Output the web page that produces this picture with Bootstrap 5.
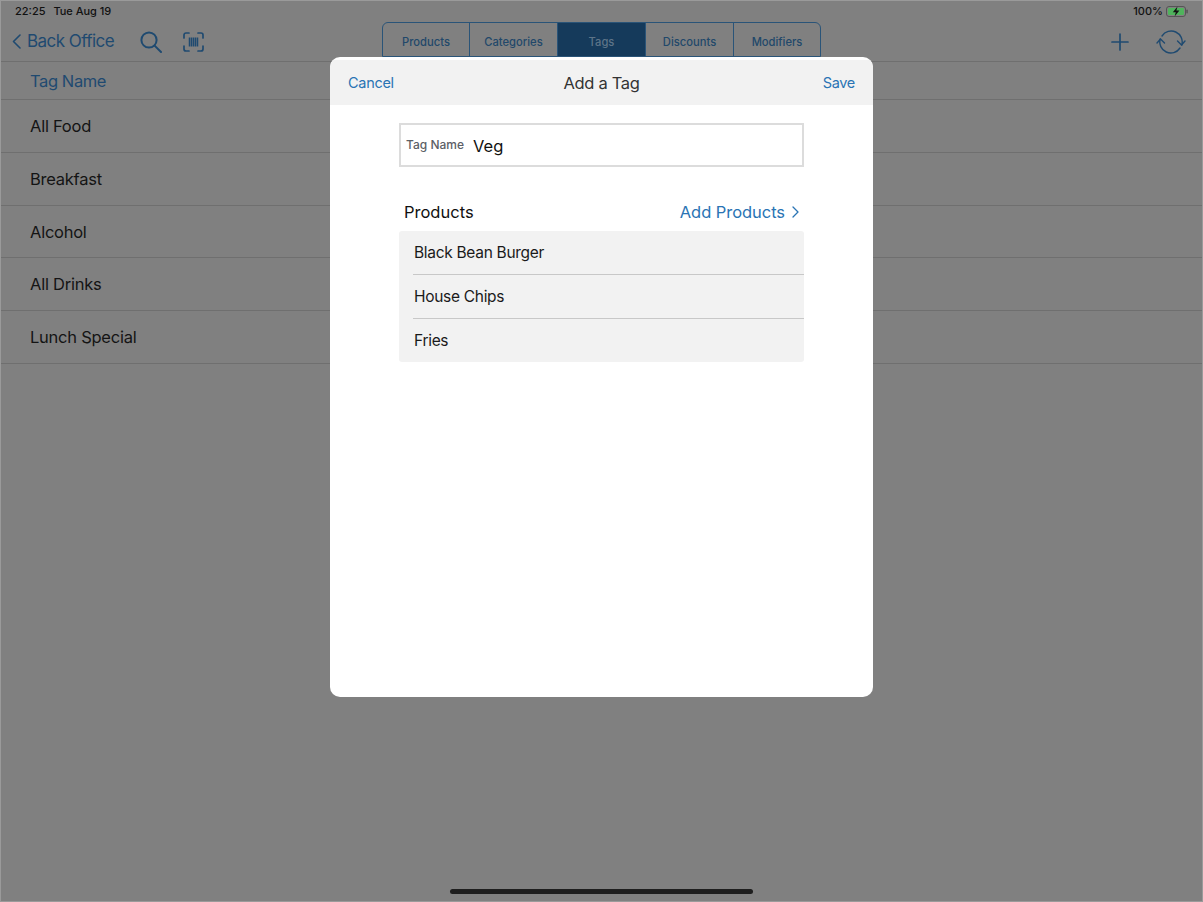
<!DOCTYPE html>
<html lang="en">

<head>
    <meta charset="UTF-8">
    <meta name="viewport" content="width=device-width, initial-scale=1.0">
    <title>Add a Tag</title>

    <link href="https://cdn.jsdelivr.net/npm/bootstrap@5.3.0/dist/css/bootstrap.min.css" rel="stylesheet">

    <style>
        html, body { height: 100%; }

        body {
            background: #808080;
            font-family: Inter, "Liberation Sans", sans-serif;
            color: #111;
            overflow: hidden;
        }

        .screen {
            position: relative;
            height: 902px;
            border: 1px solid #9a9a9a;
        }

        .status-bar {
            height: 21px;
            padding: 0 14px;
            font-size: 11px;
            font-weight: 500;
            color: #111;
        }

        .status-bar .date {
            margin-left: 8px;
            letter-spacing: -0.05px;
        }

        .battery {
            width: 22px;
            height: 11px;
            margin-left: 3px;
        }

        .top-bar {
            height: 40px;
            border-bottom: 1px solid #6f6f6f;
            padding-left: 11px;
            padding-right: 16px;
        }

        .back-link {
            color: #1f4a70;
            font-size: 17px;
            letter-spacing: -0.55px;
            text-decoration: none;
            width: 128px;
            padding-top: 1px;
        }

        .back-link svg {
            margin-right: 6px;
            margin-top: -1px;
        }

        .scan-icon { margin-left: 21px; }

        .right-tools { gap: 27px; }

        .seg {
            width: 439px;
            height: 35px;
            border: 1px solid #2a5478;
            border-radius: 6px 6px 0 0;
            overflow: hidden;
            position: absolute;
            left: 381px;
            top: 21px;
        }

        .seg div {
            flex: 0 0 88px;
            color: #22486a;
            font-size: 11.2px;
            font-weight: 500;
            line-height: 38px;
            text-align: center;
            border-left: 1px solid #2a5478;
        }

        .seg div:first-child {
            flex-basis: 86px;
            border-left: 0;
        }

        .seg div:last-child { flex-basis: 87px; }

        .seg div.on {
            background: #153a5b;
            color: #5d7488;
        }

        .col-head {
            height: 38px;
            padding: 1px 0 0 29px;
            color: #1f4a70;
            font-size: 16.5px;
            letter-spacing: -0.4px;
            border-bottom: 1px solid #6f6f6f;
        }

        .tag-row {
            height: 52.8px;
            padding: 1px 0 0 29px;
            font-size: 16.5px;
            letter-spacing: -0.25px;
            color: #141414;
            border-bottom: 1px solid #6f6f6f;
        }

        .sheet {
            position: absolute;
            left: 329px;
            top: 56px;
            width: 543px;
            height: 640px;
            background: #fff;
            border-radius: 10px;
            padding-top: 3px;
            overflow: hidden;
        }

        .sheet-head {
            height: 45px;
            background: #f2f2f2;
            padding: 1px 18px 0;
            font-size: 14.5px;
            letter-spacing: -0.3px;
        }

        .sheet-head a {
            color: #2a74b4;
            text-decoration: none;
            flex: 1 1 0;
        }

        .sheet-head .title {
            color: #333;
            font-size: 16.5px;
            letter-spacing: -0.3px;
        }

        .sheet-body {
            width: 405px;
            margin: 18px auto 0;
        }

        .tag-field {
            height: 44px;
            border: 2px solid #dcdcdc;
            padding-left: 5px;
        }

        .tag-field label {
            color: #5c6066;
            font-size: 12px;
            font-weight: 500;
            margin-right: 9px;
        }

        .tag-field input {
            border: 0;
            outline: 0;
            padding: 2px 0 0;
            flex: 1;
            min-width: 0;
            font-size: 16.5px;
            color: #111;
            background: transparent;
        }

        .products-head {
            margin-top: 34px;
            height: 22px;
            padding: 0 5px;
            font-size: 16.5px;
            color: #111;
        }

        .products-head a {
            color: #2a74b4;
            font-size: 16.5px;
            letter-spacing: -0.05px;
            text-decoration: none;
        }

        .products-head a svg { margin-left: 7px; }

        .product-list {
            margin-top: 8px;
            border-radius: 3px;
            --bs-list-group-bg: #f2f2f2;
            --bs-list-group-border-width: 0;
        }

        .product-list .list-group-item {
            height: 44px;
            padding: 0 0 0 14px;
            font-size: 15.5px;
            letter-spacing: -0.3px;
            color: #1a1a1a;
            display: flex;
        }

        .product-list .list-group-item:last-child { height: 43px; }

        .product-list .list-group-item > span {
            flex: 1;
            display: flex;
            align-items: center;
            padding-left: 1px;
            border-bottom: 1px solid #c8c8c8;
        }

        .product-list .list-group-item:last-child > span { border-bottom: 0; }

        .home-bar {
            position: absolute;
            left: 449px;
            top: 888px;
            width: 303px;
            height: 5px;
            background: #1e1e1e;
            border-radius: 3px;
        }
    </style>
</head>

<body>
    <div class="screen">
        <!-- status bar -->
        <div class="status-bar d-flex justify-content-between align-items-center">
            <div><span>22:25</span><span class="date">Tue Aug 19</span></div>
            <div class="d-flex align-items-center">
                <span>100%</span>
                <svg class="battery" viewBox="0 0 22 11">
                    <rect x="0.5" y="0.5" width="19" height="10" rx="2.5" fill="none" stroke="#555"/>
                    <rect x="2" y="2" width="16" height="7" rx="1.2" fill="#4fb35c"/>
                    <rect x="20.3" y="3.5" width="1.5" height="4" rx="0.7" fill="#555"/>
                    <path d="M11.500 0.500 6.800 6.200H9.800L8.600 10.500 13.400 4.600H10.400Z" fill="#111"/>
                </svg>
            </div>
        </div>

        <!-- top bar -->
        <div class="top-bar d-flex align-items-center justify-content-between">
            <div class="d-flex align-items-center">
                <a class="back-link d-flex align-items-center" href="#">
                    <svg width="9" height="15" viewBox="0 0 9 15" fill="none" stroke="#1f4a70" stroke-width="1.600" stroke-linecap="round" stroke-linejoin="round"><path d="M8 1 1.500 7.500 8 14"/></svg>
                    Back Office
                </a>
                <svg width="22" height="22" viewBox="0 0 22 22" fill="none" stroke="#1f4a70" stroke-width="2" stroke-linecap="round"><circle cx="9" cy="9" r="7.600"/><path d="M14.600 14.600 21 21"/></svg>
                <svg class="scan-icon" width="21" height="20" viewBox="0 0 21 20" fill="none" stroke="#1f4a70" stroke-width="1.700" stroke-linecap="round"><path d="M1 6V3a2 2 0 0 1 2-2h3M15 1h3a2 2 0 0 1 2 2v3M20 14v3a2 2 0 0 1-2 2h-3M6 19H3a2 2 0 0 1-2-2v-3"/><path d="M6.500 5.500v9M8.500 5.500v9M10.500 5.500v9M12.500 5.500v9M14.500 5.500v9" stroke-width="1.500" stroke-linecap="butt"/></svg>
            </div>
            <div class="right-tools d-flex align-items-center">
                <svg width="18" height="18" viewBox="0 0 18 18" stroke="#1f4a70" stroke-width="1.700" stroke-linecap="round"><path d="M9 1v16M1 9h16"/></svg>
                <svg width="30" height="24" viewBox="0 0 30 24" fill="none" stroke="#1f4a70" stroke-width="1.400" stroke-linecap="round" stroke-linejoin="round"><path d="M6 6A11 11 0 0 1 25.800 15M24 18A11 11 0 0 1 4.200 9"/><path d="M1 13 4.500 9 8.500 13M21.500 11 25.500 15 29 11"/></svg>
            </div>
        </div>

        <div class="seg d-flex">
            <div>Products</div>
            <div>Categories</div>
            <div class="on">Tags</div>
            <div>Discounts</div>
            <div>Modifiers</div>
        </div>

        <!-- tag list behind the sheet -->
        <div class="col-head d-flex align-items-center">Tag Name</div>
        <div class="tag-row d-flex align-items-center">All Food</div>
        <div class="tag-row d-flex align-items-center">Breakfast</div>
        <div class="tag-row d-flex align-items-center">Alcohol</div>
        <div class="tag-row d-flex align-items-center">All Drinks</div>
        <div class="tag-row d-flex align-items-center">Lunch Special</div>

        <!-- add tag sheet -->
        <div class="sheet">
            <div class="sheet-head d-flex align-items-center justify-content-between">
                <a href="#">Cancel</a>
                <span class="title">Add a Tag</span>
                <a class="text-end" href="#">Save</a>
            </div>
            <div class="sheet-body">
                <div class="tag-field d-flex align-items-center">
                    <label for="tagName">Tag Name</label>
                    <input id="tagName" type="text" value="Veg">
                </div>
                <div class="products-head d-flex align-items-center justify-content-between">
                    <span>Products</span>
                    <a class="d-flex align-items-center" href="#">Add Products
                        <svg width="7" height="12" viewBox="0 0 7 12" fill="none" stroke="#2a74b4" stroke-width="1.300" stroke-linecap="round" stroke-linejoin="round"><path d="M1 1 6 6 1 11"/></svg>
                    </a>
                </div>
                <ul class="list-group product-list">
                    <li class="list-group-item"><span>Black Bean Burger</span></li>
                    <li class="list-group-item"><span>House Chips</span></li>
                    <li class="list-group-item"><span>Fries</span></li>
                </ul>
            </div>
        </div>

        <div class="home-bar"></div>
    </div>

    <script src="https://cdn.jsdelivr.net/npm/bootstrap@5.3.0/dist/js/bootstrap.bundle.min.js"></script>
</body>

</html>
